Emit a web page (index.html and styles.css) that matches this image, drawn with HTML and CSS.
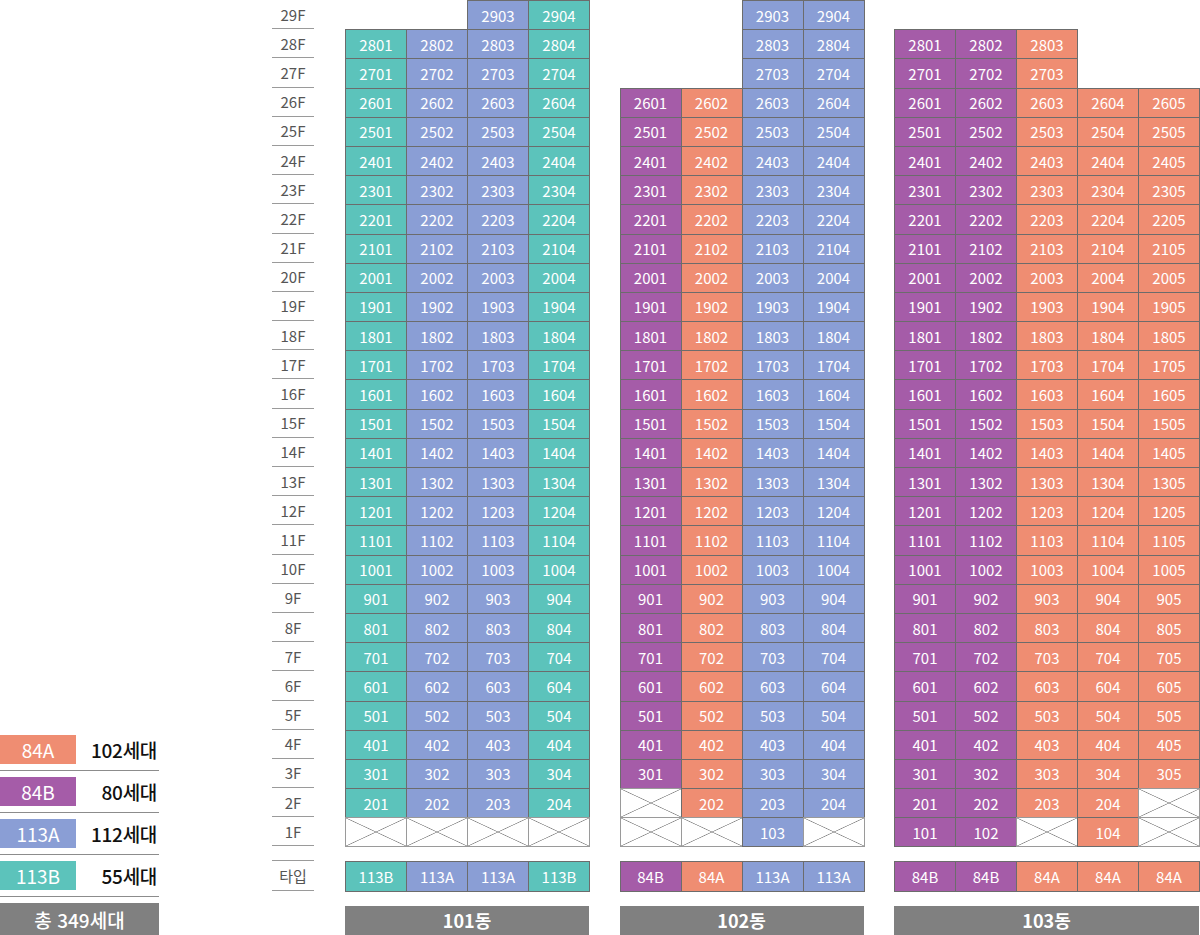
FILE: index.html
```html
<!DOCTYPE html>
<html lang="ko">
<head>
<meta charset="utf-8">
<title>동호수 배치도</title>
<link rel="stylesheet" href="styles.css">
</head>
<body>
<div class="page">
  <div class="legend">
    <div class="legend-row"><span class="swatch a">84A</span><span class="count">102세대</span></div>
    <div class="legend-row"><span class="swatch b">84B</span><span class="count">80세대</span></div>
    <div class="legend-row"><span class="swatch ta">113A</span><span class="count">112세대</span></div>
    <div class="legend-row"><span class="swatch tb">113B</span><span class="count">55세대</span></div>
    <div class="total">총 349세대</div>
  </div>

  <div class="floors">
    <div class="floor">29F</div><div class="floor">28F</div><div class="floor">27F</div><div class="floor">26F</div><div class="floor">25F</div>
    <div class="floor">24F</div><div class="floor">23F</div><div class="floor">22F</div><div class="floor">21F</div><div class="floor">20F</div>
    <div class="floor">19F</div><div class="floor">18F</div><div class="floor">17F</div><div class="floor">16F</div><div class="floor">15F</div>
    <div class="floor">14F</div><div class="floor">13F</div><div class="floor">12F</div><div class="floor">11F</div><div class="floor">10F</div>
    <div class="floor">9F</div><div class="floor">8F</div><div class="floor">7F</div><div class="floor">6F</div><div class="floor">5F</div>
    <div class="floor">4F</div><div class="floor">3F</div><div class="floor">2F</div><div class="floor">1F</div>
    <div class="floor floor-type">타입</div>
  </div>

  <div class="bldg">
    <div class="grid g4">
      <i></i><i></i><span class="u ta">2903</span><span class="u tb">2904</span>
      <span class="u tb">2801</span><span class="u ta">2802</span><span class="u ta">2803</span><span class="u tb">2804</span>
      <span class="u tb">2701</span><span class="u ta">2702</span><span class="u ta">2703</span><span class="u tb">2704</span>
      <span class="u tb">2601</span><span class="u ta">2602</span><span class="u ta">2603</span><span class="u tb">2604</span>
      <span class="u tb">2501</span><span class="u ta">2502</span><span class="u ta">2503</span><span class="u tb">2504</span>
      <span class="u tb">2401</span><span class="u ta">2402</span><span class="u ta">2403</span><span class="u tb">2404</span>
      <span class="u tb">2301</span><span class="u ta">2302</span><span class="u ta">2303</span><span class="u tb">2304</span>
      <span class="u tb">2201</span><span class="u ta">2202</span><span class="u ta">2203</span><span class="u tb">2204</span>
      <span class="u tb">2101</span><span class="u ta">2102</span><span class="u ta">2103</span><span class="u tb">2104</span>
      <span class="u tb">2001</span><span class="u ta">2002</span><span class="u ta">2003</span><span class="u tb">2004</span>
      <span class="u tb">1901</span><span class="u ta">1902</span><span class="u ta">1903</span><span class="u tb">1904</span>
      <span class="u tb">1801</span><span class="u ta">1802</span><span class="u ta">1803</span><span class="u tb">1804</span>
      <span class="u tb">1701</span><span class="u ta">1702</span><span class="u ta">1703</span><span class="u tb">1704</span>
      <span class="u tb">1601</span><span class="u ta">1602</span><span class="u ta">1603</span><span class="u tb">1604</span>
      <span class="u tb">1501</span><span class="u ta">1502</span><span class="u ta">1503</span><span class="u tb">1504</span>
      <span class="u tb">1401</span><span class="u ta">1402</span><span class="u ta">1403</span><span class="u tb">1404</span>
      <span class="u tb">1301</span><span class="u ta">1302</span><span class="u ta">1303</span><span class="u tb">1304</span>
      <span class="u tb">1201</span><span class="u ta">1202</span><span class="u ta">1203</span><span class="u tb">1204</span>
      <span class="u tb">1101</span><span class="u ta">1102</span><span class="u ta">1103</span><span class="u tb">1104</span>
      <span class="u tb">1001</span><span class="u ta">1002</span><span class="u ta">1003</span><span class="u tb">1004</span>
      <span class="u tb">901</span><span class="u ta">902</span><span class="u ta">903</span><span class="u tb">904</span>
      <span class="u tb">801</span><span class="u ta">802</span><span class="u ta">803</span><span class="u tb">804</span>
      <span class="u tb">701</span><span class="u ta">702</span><span class="u ta">703</span><span class="u tb">704</span>
      <span class="u tb">601</span><span class="u ta">602</span><span class="u ta">603</span><span class="u tb">604</span>
      <span class="u tb">501</span><span class="u ta">502</span><span class="u ta">503</span><span class="u tb">504</span>
      <span class="u tb">401</span><span class="u ta">402</span><span class="u ta">403</span><span class="u tb">404</span>
      <span class="u tb">301</span><span class="u ta">302</span><span class="u ta">303</span><span class="u tb">304</span>
      <span class="u tb">201</span><span class="u ta">202</span><span class="u ta">203</span><span class="u tb">204</span>
      <span class="u x"></span><span class="u x"></span><span class="u x"></span><span class="u x"></span>
    </div>
    <div class="types g4">
      <span class="u tb">113B</span><span class="u ta">113A</span><span class="u ta">113A</span><span class="u tb">113B</span>
    </div>
    <div class="name">101동</div>
  </div>

  <div class="bldg">
    <div class="grid g4">
      <i></i><i></i><span class="u ta">2903</span><span class="u ta">2904</span>
      <i></i><i></i><span class="u ta">2803</span><span class="u ta">2804</span>
      <i></i><i></i><span class="u ta">2703</span><span class="u ta">2704</span>
      <span class="u b">2601</span><span class="u a">2602</span><span class="u ta">2603</span><span class="u ta">2604</span>
      <span class="u b">2501</span><span class="u a">2502</span><span class="u ta">2503</span><span class="u ta">2504</span>
      <span class="u b">2401</span><span class="u a">2402</span><span class="u ta">2403</span><span class="u ta">2404</span>
      <span class="u b">2301</span><span class="u a">2302</span><span class="u ta">2303</span><span class="u ta">2304</span>
      <span class="u b">2201</span><span class="u a">2202</span><span class="u ta">2203</span><span class="u ta">2204</span>
      <span class="u b">2101</span><span class="u a">2102</span><span class="u ta">2103</span><span class="u ta">2104</span>
      <span class="u b">2001</span><span class="u a">2002</span><span class="u ta">2003</span><span class="u ta">2004</span>
      <span class="u b">1901</span><span class="u a">1902</span><span class="u ta">1903</span><span class="u ta">1904</span>
      <span class="u b">1801</span><span class="u a">1802</span><span class="u ta">1803</span><span class="u ta">1804</span>
      <span class="u b">1701</span><span class="u a">1702</span><span class="u ta">1703</span><span class="u ta">1704</span>
      <span class="u b">1601</span><span class="u a">1602</span><span class="u ta">1603</span><span class="u ta">1604</span>
      <span class="u b">1501</span><span class="u a">1502</span><span class="u ta">1503</span><span class="u ta">1504</span>
      <span class="u b">1401</span><span class="u a">1402</span><span class="u ta">1403</span><span class="u ta">1404</span>
      <span class="u b">1301</span><span class="u a">1302</span><span class="u ta">1303</span><span class="u ta">1304</span>
      <span class="u b">1201</span><span class="u a">1202</span><span class="u ta">1203</span><span class="u ta">1204</span>
      <span class="u b">1101</span><span class="u a">1102</span><span class="u ta">1103</span><span class="u ta">1104</span>
      <span class="u b">1001</span><span class="u a">1002</span><span class="u ta">1003</span><span class="u ta">1004</span>
      <span class="u b">901</span><span class="u a">902</span><span class="u ta">903</span><span class="u ta">904</span>
      <span class="u b">801</span><span class="u a">802</span><span class="u ta">803</span><span class="u ta">804</span>
      <span class="u b">701</span><span class="u a">702</span><span class="u ta">703</span><span class="u ta">704</span>
      <span class="u b">601</span><span class="u a">602</span><span class="u ta">603</span><span class="u ta">604</span>
      <span class="u b">501</span><span class="u a">502</span><span class="u ta">503</span><span class="u ta">504</span>
      <span class="u b">401</span><span class="u a">402</span><span class="u ta">403</span><span class="u ta">404</span>
      <span class="u b">301</span><span class="u a">302</span><span class="u ta">303</span><span class="u ta">304</span>
      <span class="u x"></span><span class="u a">202</span><span class="u ta">203</span><span class="u ta">204</span>
      <span class="u x"></span><span class="u x"></span><span class="u ta">103</span><span class="u x"></span>
    </div>
    <div class="types g4">
      <span class="u b">84B</span><span class="u a">84A</span><span class="u ta">113A</span><span class="u ta">113A</span>
    </div>
    <div class="name">102동</div>
  </div>

  <div class="bldg last">
    <div class="grid g5">
      <i></i><i></i><i></i><i></i><i></i>
      <span class="u b">2801</span><span class="u b">2802</span><span class="u a">2803</span><i></i><i></i>
      <span class="u b">2701</span><span class="u b">2702</span><span class="u a">2703</span><i></i><i></i>
      <span class="u b">2601</span><span class="u b">2602</span><span class="u a">2603</span><span class="u a">2604</span><span class="u a">2605</span>
      <span class="u b">2501</span><span class="u b">2502</span><span class="u a">2503</span><span class="u a">2504</span><span class="u a">2505</span>
      <span class="u b">2401</span><span class="u b">2402</span><span class="u a">2403</span><span class="u a">2404</span><span class="u a">2405</span>
      <span class="u b">2301</span><span class="u b">2302</span><span class="u a">2303</span><span class="u a">2304</span><span class="u a">2305</span>
      <span class="u b">2201</span><span class="u b">2202</span><span class="u a">2203</span><span class="u a">2204</span><span class="u a">2205</span>
      <span class="u b">2101</span><span class="u b">2102</span><span class="u a">2103</span><span class="u a">2104</span><span class="u a">2105</span>
      <span class="u b">2001</span><span class="u b">2002</span><span class="u a">2003</span><span class="u a">2004</span><span class="u a">2005</span>
      <span class="u b">1901</span><span class="u b">1902</span><span class="u a">1903</span><span class="u a">1904</span><span class="u a">1905</span>
      <span class="u b">1801</span><span class="u b">1802</span><span class="u a">1803</span><span class="u a">1804</span><span class="u a">1805</span>
      <span class="u b">1701</span><span class="u b">1702</span><span class="u a">1703</span><span class="u a">1704</span><span class="u a">1705</span>
      <span class="u b">1601</span><span class="u b">1602</span><span class="u a">1603</span><span class="u a">1604</span><span class="u a">1605</span>
      <span class="u b">1501</span><span class="u b">1502</span><span class="u a">1503</span><span class="u a">1504</span><span class="u a">1505</span>
      <span class="u b">1401</span><span class="u b">1402</span><span class="u a">1403</span><span class="u a">1404</span><span class="u a">1405</span>
      <span class="u b">1301</span><span class="u b">1302</span><span class="u a">1303</span><span class="u a">1304</span><span class="u a">1305</span>
      <span class="u b">1201</span><span class="u b">1202</span><span class="u a">1203</span><span class="u a">1204</span><span class="u a">1205</span>
      <span class="u b">1101</span><span class="u b">1102</span><span class="u a">1103</span><span class="u a">1104</span><span class="u a">1105</span>
      <span class="u b">1001</span><span class="u b">1002</span><span class="u a">1003</span><span class="u a">1004</span><span class="u a">1005</span>
      <span class="u b">901</span><span class="u b">902</span><span class="u a">903</span><span class="u a">904</span><span class="u a">905</span>
      <span class="u b">801</span><span class="u b">802</span><span class="u a">803</span><span class="u a">804</span><span class="u a">805</span>
      <span class="u b">701</span><span class="u b">702</span><span class="u a">703</span><span class="u a">704</span><span class="u a">705</span>
      <span class="u b">601</span><span class="u b">602</span><span class="u a">603</span><span class="u a">604</span><span class="u a">605</span>
      <span class="u b">501</span><span class="u b">502</span><span class="u a">503</span><span class="u a">504</span><span class="u a">505</span>
      <span class="u b">401</span><span class="u b">402</span><span class="u a">403</span><span class="u a">404</span><span class="u a">405</span>
      <span class="u b">301</span><span class="u b">302</span><span class="u a">303</span><span class="u a">304</span><span class="u a">305</span>
      <span class="u b">201</span><span class="u b">202</span><span class="u a">203</span><span class="u a">204</span><span class="u x"></span>
      <span class="u b">101</span><span class="u b">102</span><span class="u x"></span><span class="u a">104</span><span class="u x"></span>
    </div>
    <div class="types g5">
      <span class="u b">84B</span><span class="u b">84B</span><span class="u a">84A</span><span class="u a">84A</span><span class="u a">84A</span>
    </div>
    <div class="name">103동</div>
  </div>
</div>
</body>
</html>
```

FILE: styles.css
```css
* { box-sizing: border-box; }
html, body { margin: 0; padding: 0; background: #fff; }
body {
  font-family: "Noto Sans CJK KR", "Noto Sans", sans-serif;
  width: 1200px;
  height: 935px;
  overflow: hidden;
}
.page {
  display: flex;
  align-items: flex-start;
  height: 935px;
}

/* legend */
.legend {
  width: 159px;
  align-self: flex-end;
  display: flex;
  flex-direction: column;
  margin-right: 113px;
}
.legend-row {
  display: flex;
  justify-content: space-between;
  align-items: center;
  padding-bottom: 6px;
  margin-bottom: 6px;
  border-bottom: 1px solid #8c8c8c;
}
.swatch {
  width: 76px;
  height: 29px;
  color: #fff;
  font-size: 19px;
  display: flex;
  align-items: center;
  justify-content: center;
}
.count {
  font-size: 19px;
  font-weight: 500;
  color: #111;
  margin-right: 2px;
  letter-spacing: -0.3px;
}
.total {
  height: 32px;
  background: #808080;
  color: #fff;
  font-size: 19px;
  font-weight: 500;
  display: flex;
  align-items: center;
  justify-content: center;
}

/* floor labels */
.floors {
  width: 42px;
  margin-right: 31px;
  display: flex;
  flex-direction: column;
}
.floor {
  height: 29.2px;
  border-bottom: 1px solid #9a9a9a;
  font-size: 15px;
  color: #555;
  display: flex;
  align-items: center;
  justify-content: center;
}
.floor-type {
  margin-top: 14px;
  height: 31px;
  border-top: 1px solid #9a9a9a;
}

/* buildings */
.bldg {
  display: flex;
  flex-direction: column;
  margin-right: 30.5px;
}
.bldg.last { margin-right: 0; }
.grid {
  display: grid;
  grid-template-rows: repeat(29, 29.2px);
}
.g4 { grid-template-columns: repeat(4, 61px); }
.g5 { grid-template-columns: repeat(5, 61px); }
.types {
  display: grid;
  grid-template-rows: 29.2px;
  margin-top: 15px;
}
.u {
  margin: 0 -1px -1px 0;
  border: 1px solid #6c6c6c;
  color: #fff;
  font-size: 15px;
  display: flex;
  align-items: center;
  justify-content: center;
}
.name {
  margin-top: 15px;
  height: 29px;
  background: #808080;
  color: #fff;
  font-size: 18px;
  font-weight: 700;
  display: flex;
  align-items: center;
  justify-content: center;
}

/* unit types */
.a { background: #ef8d72; }
.b { background: #a55ca8; }
.ta { background: #8a9ed5; }
.tb { background: #5cc3bb; }
.x {
  border-color: #9a9a9a;
  background:
    linear-gradient(to top right, transparent calc(50% - 0.7px), #8a8a8a 50%, transparent calc(50% + 0.7px)),
    linear-gradient(to bottom right, transparent calc(50% - 0.7px), #8a8a8a 50%, transparent calc(50% + 0.7px)),
    #fff;
}
```
